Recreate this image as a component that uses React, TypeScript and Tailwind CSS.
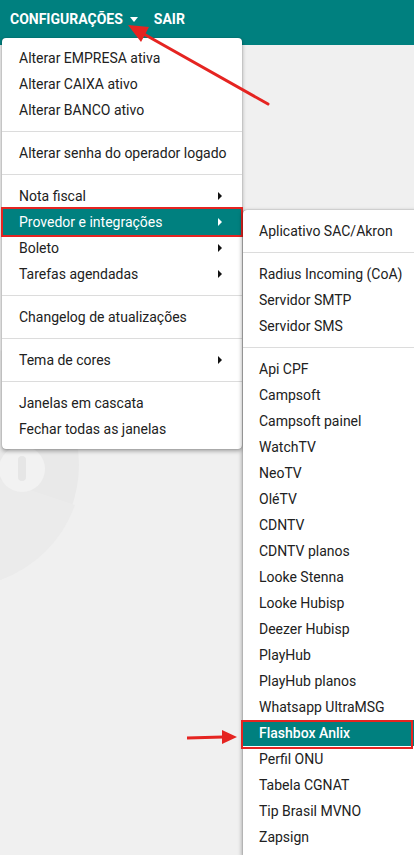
import React from "react";

const font = { fontFamily: "Roboto, 'Liberation Sans', sans-serif" };

function Row({ label, sub, active }: { label: string; sub?: boolean; active?: boolean }) {
  return (
    <div className={`relative h-[26px] flex items-center pl-[17px] text-[14px] ${active ? "bg-[#00807f] text-white" : "text-[#212121]"}`}>
      {label}
      {sub && (
        <span className={`absolute right-[20px] top-1/2 -translate-y-1/2 w-0 h-0 border-y-[4px] border-y-transparent border-l-[4px] ${active ? "border-l-white" : "border-l-[#111]"}`} />
      )}
      {active && <span className="absolute left-[-1px] right-[-1px] top-[-2px] bottom-[-2px] border-2 border-[#e52421]" />}
    </div>
  );
}

function Sep() {
  return <div className="pt-[8px] pb-[8px]"><div className="h-px bg-[#dcdcdc]" /></div>;
}

function SubRow({ label, active }: { label: string; active?: boolean }) {
  return (
    <div className={`relative h-[26px] flex items-center pl-[16px] text-[14px] whitespace-nowrap ${active ? "bg-[#00807f] text-white font-medium" : "text-[#212121]"}`}>
      {label}
      {active && <span className="absolute left-[-2px] w-[172px] top-0 bottom-[-3px] border-2 border-[#e52421]" />}
    </div>
  );
}

export default function App() {
  const subA = ["Radius Incoming (CoA)", "Servidor SMTP", "Servidor SMS"];
  const subB = [
    "Api CPF", "Campsoft", "Campsoft painel", "WatchTV", "NeoTV", "OléTV", "CDNTV", "CDNTV planos",
    "Looke Stenna", "Looke Hubisp", "Deezer Hubisp", "PlayHub", "PlayHub planos", "Whatsapp UltraMSG",
    "Flashbox Anlix", "Perfil ONU", "Tabela CGNAT", "Tip Brasil MVNO", "Zapsign",
  ];
  return (
    <div className="relative w-[414px] h-[855px] overflow-hidden bg-[#f0f0f0]" style={font}>
      <div className="h-[45px] bg-[#00807f]">
        <div className="h-[38px] flex items-center pl-[10px] text-white font-bold text-[14px]">
          <span>CONFIGURAÇÕES</span>
          <span className="ml-[7px] mt-[1px] w-0 h-0 border-x-[4px] border-x-transparent border-t-[5px] border-t-white" />
          <span className="ml-[16px]">SAIR</span>
        </div>
      </div>

      <svg className="absolute left-0 top-[300px]" width="120" height="300" viewBox="0 300 120 300">
        <circle cx="-44" cy="465" r="123" fill="#e9e9e9" />
        <path d="M0 480 L75 505 A123 123 0 0 1 0 580 Z" fill="#ebebeb" />
        <circle cx="22" cy="469" r="23" fill="#f2f2f2" />
        <rect x="18" y="456" width="8" height="25" rx="4" fill="#e6e6e6" />
      </svg>

      <div className="absolute left-[2px] top-[38px] w-[240px] bg-white rounded-[4px] py-[7px] shadow-[0_2px_4px_rgba(0,0,0,0.35),0_0_1px_rgba(0,0,0,0.4)] z-10">
        <Row label="Alterar EMPRESA ativa" />
        <Row label="Alterar CAIXA ativo" />
        <Row label="Alterar BANCO ativo" />
        <Sep />
        <Row label="Alterar senha do operador logado" />
        <Sep />
        <Row label="Nota fiscal" sub />
        <Row label="Provedor e integrações" sub active />
        <Row label="Boleto" sub />
        <Row label="Tarefas agendadas" sub />
        <Sep />
        <Row label="Changelog de atualizações" />
        <Sep />
        <Row label="Tema de cores" sub />
        <Sep />
        <Row label="Janelas em cascata" />
        <Row label="Fechar todas as janelas" />
      </div>

      <div className="absolute left-[243px] top-[210px] w-[200px] bg-white rounded-[4px] pt-[8px] pb-[8px] shadow-[-1px_1px_4px_rgba(0,0,0,0.35),0_0_1px_rgba(0,0,0,0.5)] z-20">
        <SubRow label="Aplicativo SAC/Akron" />
        <Sep />
        {subA.map((s) => <SubRow key={s} label={s} />)}
        <Sep />
        {subB.map((s) => <SubRow key={s} label={s} active={s === "Flashbox Anlix"} />)}
      </div>

      <svg className="absolute inset-0 z-30 pointer-events-none" width="414" height="855" viewBox="0 0 414 855">
        <line x1="268" y1="104" x2="142" y2="33" stroke="#e52421" strokeWidth="3" strokeLinecap="round" />
        <polygon points="128,25 149,27 141,42" fill="#e52421" />
        <line x1="187" y1="738" x2="223" y2="737" stroke="#e52421" strokeWidth="3" />
        <polygon points="237,737 222,730 222,744" fill="#e52421" />
      </svg>
    </div>
  );
}
